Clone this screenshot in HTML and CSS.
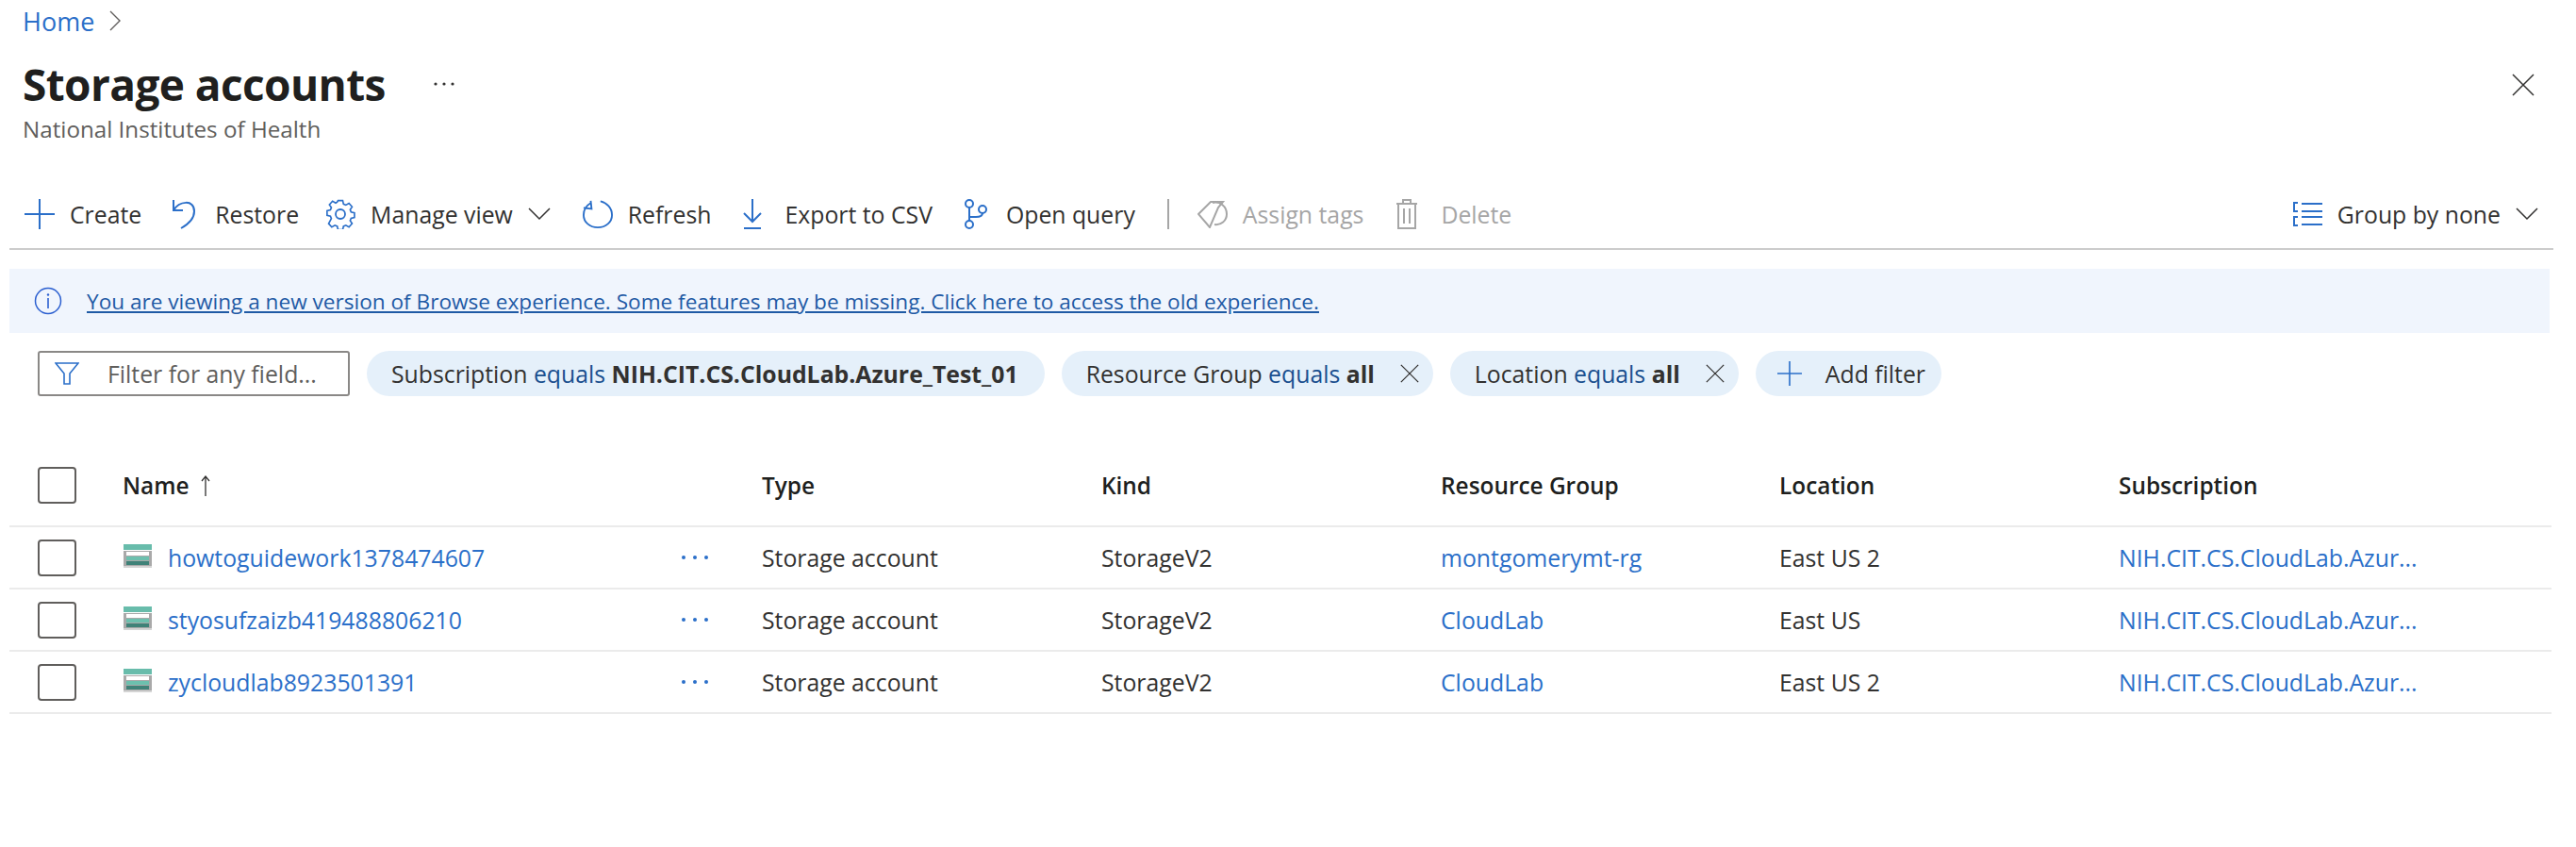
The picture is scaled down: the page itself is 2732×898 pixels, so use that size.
FILE: index.html
```html
<!DOCTYPE html>
<html lang="en">

<head>
  <meta charset="UTF-8" />
  <title>Storage accounts - Microsoft Azure</title>
  <link rel="stylesheet" href="styles.css">
</head>

<body>
  <svg class="defs" width="0" height="0">
    <symbol id="storage" viewBox="0 0 30 25">
      <rect x="0" y="7" width="30" height="18" fill="#a9a9a9" />
      <rect x="0" y="0" width="30" height="6" fill="#68bcab" />
      <rect x="3" y="8" width="24" height="4" fill="#ffffff" />
      <rect x="3" y="13" width="24" height="4" fill="#6cc0ae" />
      <rect x="3" y="18" width="24" height="4" fill="#3f8278" />
      <rect x="0" y="23" width="30" height="2" fill="#d4d4d4" />
    </symbol>
    <symbol id="close" viewBox="0 0 24 24">
      <path d="M1 1 23 23M23 1 1 23" fill="none" stroke="#323130" stroke-width="1.5" />
    </symbol>
    <symbol id="chev" viewBox="0 0 24 14">
      <path d="M1 1 12 12 23 1" fill="none" stroke="#323130" stroke-width="1.5" />
    </symbol>
    <symbol id="dots" viewBox="0 0 30 6">
      <circle cx="3" cy="3" r="2" fill="#2b6fc9" />
      <circle cx="15" cy="3" r="2" fill="#2b6fc9" />
      <circle cx="27" cy="3" r="2" fill="#2b6fc9" />
    </symbol>
    <symbol id="plus" viewBox="0 0 32 32">
      <path d="M16 0V32M0 16H32" fill="none" stroke="#2b6fc9" stroke-width="2" />
    </symbol>
  </svg>

  <div class="crumbs">
    <a href="#">Home</a>
    <svg class="crumb-chev" viewBox="0 0 12 22"><path d="M1 1 11 11 1 21" fill="none" stroke="#605e5c" stroke-width="1.4" /></svg>
  </div>

  <div class="page-head">
    <div class="head-text">
      <div class="title-row">
        <h1>Storage accounts</h1>
        <svg class="title-dots" viewBox="0 0 22 4">
          <circle cx="2" cy="2" r="1.6" fill="#323130" />
          <circle cx="11" cy="2" r="1.6" fill="#323130" />
          <circle cx="20" cy="2" r="1.6" fill="#323130" />
        </svg>
      </div>
      <p class="subtitle">National Institutes of Health</p>
    </div>
    <svg class="page-close"><use href="#close" /></svg>
  </div>

  <div class="toolbar">
    <button class="tool tool-create"><svg class="ic" viewBox="0 0 32 32"><use href="#plus" /></svg>Create</button>
    <button class="tool tool-wide tool-restore">
      <svg class="ic ic-restore" viewBox="0 0 26 32"><path d="M2 1V12H12M2 12C8 2 24 0 24 13 24 20 19 26 10 31" fill="none" stroke="#2b6fc9" stroke-width="2" /></svg>Restore
    </button>
    <button class="tool">
      <svg class="ic" viewBox="0 0 32 32">
        <path d="M13 1h6l1 4.500 3 1.300 4-2.300 4 4.500-2.500 3.700 1.200 3 4.300 1v6l-4.300 1-1.200 3 2.500 3.700-4 4.500-4-2.300-3 1.300-1 4.500h-6l-1-4.500-3-1.300-4 2.300-4-4.500L4.500 24l-1.200-3L-1 20v-6l4.300-1 1.200-3L2 6.300l4-4.500 4 2.300 2-1.300z" transform="translate(2.700 0.800) scale(.83 .83)" fill="none" stroke="#2b6fc9" stroke-width="2" />
        <circle cx="16" cy="16" r="5" fill="none" stroke="#2b6fc9" stroke-width="1.800" />
      </svg>Manage view
      <svg class="tool-chev"><use href="#chev" /></svg>
    </button>
    <button class="tool">
      <svg class="ic" viewBox="0 0 34 32"><path d="M9 3.500C3 7 1 12 1 17c0 8 7 14 16 14s16-6 16-14C33 9 27 3 20 1.500M9 1 10 10 1 9" fill="none" stroke="#2b6fc9" stroke-width="2" /></svg>Refresh
    </button>
    <button class="tool tool-wider">
      <svg class="ic ic-export" viewBox="0 0 20 32"><path d="M10 0V24M1 15 10 24 19 15M1 31H19" fill="none" stroke="#2b6fc9" stroke-width="2" /></svg>Export to CSV
    </button>
    <button class="tool tool-wide">
      <svg class="ic ic-query" viewBox="0 0 24 32">
        <g fill="none" stroke="#2b6fc9" stroke-width="2">
          <circle cx="5" cy="5" r="4" />
          <circle cx="5" cy="27" r="4" />
          <circle cx="19" cy="11" r="4" />
          <path d="M5 9V23M5 19H12C16 19 19 18 19 15" />
        </g>
      </svg>Open query
    </button>
    <span class="tool-sep"></span>
    <button class="tool tool-off">
      <svg class="ic ic-tag" viewBox="0 0 32 30"><g fill="none" stroke="#a6a6a6" stroke-width="2"><path d="M1 15 14 2H27L22 8 13 29Z" /><path d="M16 3C24 1 31 7 31 15 31 22 25 27 18 26" /></g></svg>Assign tags
    </button>
    <button class="tool tool-off tool-wider">
      <svg class="ic ic-trash" viewBox="0 0 24 32"><g fill="none" stroke="#a6a6a6" stroke-width="2"><path d="M1 5H23M8 5V1H16V5M3 5V31H21V5M9 10V26M15 10V26" /></g></svg>Delete
    </button>
    <button class="tool tool-group">
      <svg class="ic ic-group" viewBox="0 0 31 26">
        <path d="M5 1H1V10H5M5 16H1V25H5M9 2H31M9 10H31M9 16H31M9 24H31" fill="none" stroke="#2b6fc9" stroke-width="2" />
      </svg>Group by none
      <svg class="tool-chev"><use href="#chev" /></svg>
    </button>
  </div>

  <div class="notice">
    <svg class="notice-ic" viewBox="0 0 30 30">
      <circle cx="15" cy="15" r="13.500" fill="none" stroke="#2b5fd0" stroke-width="1.500" />
      <path d="M15 12V23" stroke="#2b5fd0" stroke-width="1.600" />
      <circle cx="15" cy="8.500" r="1.200" fill="#2b5fd0" />
    </svg>
    <a href="#">You are viewing a new version of Browse experience. Some features may be missing. Click here to access the old experience.</a>
  </div>

  <div class="filters">
    <label class="filter-box">
      <svg class="filter-ic" viewBox="0 0 26 24"><path d="M1 1H25L16 12V23H10V12Z" fill="none" stroke="#2b6fc9" stroke-width="1.600" /></svg>
      <span>Filter for any field...</span>
    </label>
    <div class="chip chip-sub"><span>Subscription <em>equals</em> <b>NIH.CIT.CS.CloudLab.Azure_Test_01</b></span></div>
    <div class="chip"><span>Resource Group <em>equals</em> <b>all</b></span><svg class="chip-x"><use href="#close" /></svg></div>
    <div class="chip"><span>Location <em>equals</em> <b>all</b></span><svg class="chip-x"><use href="#close" /></svg></div>
    <div class="chip chip-add"><svg class="chip-plus" viewBox="0 0 32 32"><use href="#plus" /></svg><span>Add filter</span></div>
  </div>

  <div class="grid">
    <div class="row row-head">
      <span class="check check-head"></span>
      <span class="cell-name">Name <svg class="sort" viewBox="0 0 10 22"><path d="M5 1V22M1 6 5 1 9 6" fill="none" stroke="#323130" stroke-width="1.300" /></svg></span>
      <span></span>
      <span>Type</span>
      <span>Kind</span>
      <span>Resource Group</span>
      <span>Location</span>
      <span>Subscription</span>
    </div>

    <div class="row">
      <span class="check"></span>
      <span class="cell-name"><svg class="st-ic"><use href="#storage" /></svg><a href="#">howtoguidework1378474607</a></span>
      <svg class="row-dots"><use href="#dots" /></svg>
      <span>Storage account</span>
      <span>StorageV2</span>
      <a href="#">montgomerymt-rg</a>
      <span>East US 2</span>
      <a href="#">NIH.CIT.CS.CloudLab.Azur...</a>
    </div>

    <div class="row">
      <span class="check"></span>
      <span class="cell-name"><svg class="st-ic"><use href="#storage" /></svg><a href="#">styosufzaizb419488806210</a></span>
      <svg class="row-dots"><use href="#dots" /></svg>
      <span>Storage account</span>
      <span>StorageV2</span>
      <a href="#">CloudLab</a>
      <span>East US</span>
      <a href="#">NIH.CIT.CS.CloudLab.Azur...</a>
    </div>

    <div class="row">
      <span class="check"></span>
      <span class="cell-name"><svg class="st-ic"><use href="#storage" /></svg><a href="#">zycloudlab8923501391</a></span>
      <svg class="row-dots"><use href="#dots" /></svg>
      <span>Storage account</span>
      <span>StorageV2</span>
      <a href="#">CloudLab</a>
      <span>East US 2</span>
      <a href="#">NIH.CIT.CS.CloudLab.Azur...</a>
    </div>
  </div>
</body>

</html>
```

FILE: styles.css
```css
body {
  margin: 0;
  background-color: #fff;
  color: #323130;
  font-family: "Open Sans", "Noto Sans", sans-serif;
  font-size: 24.8px;
  overflow: hidden;
}

a {
  color: #2b6fc9;
  text-decoration: none;
}

.defs {
  display: block;
}

/* breadcrumb + title */
.crumbs {
  display: flex;
  align-items: center;
  gap: 16px;
  height: 44px;
  padding-left: 24px;
  font-size: 27px;
}

.crumb-chev {
  width: 12px;
  height: 22px;
}

.page-head {
  display: flex;
  justify-content: space-between;
  padding: 19px 44px 0 24px;
}

.title-row {
  display: flex;
  align-items: center;
  gap: 51px;
  height: 52px;
}

h1 {
  margin: 0;
  font-size: 46px;
  font-weight: 700;
  letter-spacing: -0.6px;
  color: #201f1e;
}

.title-dots {
  width: 22px;
  height: 4px;
}

.subtitle {
  margin: 5px 0 0;
  font-size: 24.2px;
  color: #605e5c;
}

.page-close {
  width: 24px;
  height: 24px;
  margin-top: 15px;
}

/* command bar */
.toolbar {
  display: flex;
  align-items: center;
  height: 52px;
  margin: 48px 24px 0 10px;
  padding: 0 0 10px 16px;
  border-bottom: 2px solid #cccccc;
}

.tool {
  display: flex;
  align-items: center;
  gap: 16px;
  margin-right: 34px;
  padding: 0;
  border: 0;
  background: none;
  color: #323130;
  font: inherit;
}

.tool-create {
  margin-right: 32px;
}

.tool-restore {
  margin-right: 28px;
}

.tool-wide {
  gap: 20px;
}

.tool-wider {
  gap: 24px;
}

.tool-off {
  color: #a6a6a6;
}

.tool-group {
  margin-left: auto;
  margin-right: 16px;
}

.ic {
  width: 32px;
  height: 32px;
}

.ic-restore {
  width: 26px;
}

.ic-export {
  width: 20px;
}

.ic-query {
  width: 24px;
}

.ic-tag {
  height: 30px;
}

.ic-trash {
  width: 24px;
}

.ic-group {
  width: 31px;
  height: 26px;
}

.tool-chev {
  width: 24px;
  height: 14px;
}

.tool-sep {
  width: 2px;
  height: 32px;
  margin-right: 30px;
  background-color: #a6a6a6;
}

/* info banner */
.notice {
  display: flex;
  align-items: center;
  gap: 26px;
  height: 68px;
  margin: 20px 28px 0 10px;
  padding-left: 26px;
  background-color: #f0f5fd;
  font-size: 22.6px;
}

.notice a {
  color: #1f5aa5;
  text-decoration: underline;
}

.notice-ic {
  width: 30px;
  height: 30px;
}

/* filter pills */
.filters {
  display: flex;
  align-items: center;
  gap: 18px;
  margin: 19px 0 0 40px;
}

.filter-box {
  display: flex;
  align-items: center;
  gap: 30px;
  box-sizing: border-box;
  width: 331px;
  height: 48px;
  padding-left: 16px;
  border: 2px solid #8a8886;
  border-radius: 3px;
  color: #605e5c;
}

.filter-ic {
  width: 26px;
  height: 24px;
}

.chip {
  display: flex;
  align-items: center;
  box-sizing: border-box;
  height: 48px;
  padding: 0 26px;
  border-radius: 24px;
  background-color: #e5f0fa;
  white-space: pre;
}

.chip-sub {
  padding-right: 28px;
}

.chip-add {
  padding: 0 17px 0 23px;
}

.chip em {
  font-style: normal;
  color: #1a4f8f;
}

.chip b {
  font-weight: 700;
}

.chip-x {
  width: 20px;
  height: 20px;
  margin-left: 27px;
  margin-right: -11px;
}

.chip-plus {
  width: 26px;
  height: 26px;
  margin-right: 25px;
}

/* resource list */
.grid {
  margin: 52px 26px 0 10px;
}

.row {
  display: grid;
  grid-template-columns: 90px 592px 86px 360px 360px 359px 360px 1fr;
  align-items: center;
  box-sizing: border-box;
  height: 66px;
  padding-left: 30px;
  border-bottom: 2px solid #ebebeb;
}

.row-head {
  height: 87px;
  font-weight: 600;
  font-size: 24.4px;
  color: #201f1e;
}

.check {
  box-sizing: border-box;
  display: block;
  width: 41px;
  height: 39px;
  border: 2px solid #605e5c;
  border-radius: 4px;
}

.cell-name {
  display: flex;
  align-items: center;
  gap: 17px;
}

.row-head .cell-name {
  gap: 12px;
}

.sort {
  width: 10px;
  height: 22px;
}

.st-ic {
  width: 30px;
  height: 25px;
  margin: -4px 0 0 1px;
}

.row-dots {
  width: 30px;
  height: 6px;
}
```
